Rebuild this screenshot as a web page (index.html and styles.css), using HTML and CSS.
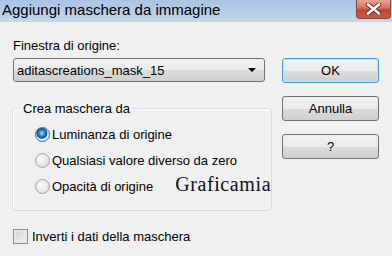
FILE: index.html
```html
<!DOCTYPE html>
<html lang="it">
<head>
  <meta charset="UTF-8">
  <title>Aggiungi maschera da immagine</title>
  <link rel="stylesheet" href="styles.css">
</head>
<body>

  <div class="window">
    <div class="titlebar">
      <span class="title">Aggiungi maschera da immagine</span>
      <button class="close">
        <svg width="17" height="12" viewBox="0 0 17 12">
          <path d="M3 1.5 L14 10.5 M14 1.5 L3 10.5" stroke="#6b2a22" stroke-width="4.4" stroke-linecap="round"/>
          <path d="M3 1.5 L14 10.5 M14 1.5 L3 10.5" stroke="#ffffff" stroke-width="2.6" stroke-linecap="round"/>
        </svg>
      </button>
    </div>

    <div class="content">
      <div class="left">
        <div class="label">Finestra di origine:</div>
        <div class="select">
          <span>aditascreations_mask_15</span>
          <span class="arrow"></span>
        </div>

        <fieldset class="group">
          <legend>Crea maschera da</legend>
          <div class="option"><span class="radio checked"></span>Luminanza di origine</div>
          <div class="option"><span class="radio"></span>Qualsiasi valore diverso da zero</div>
          <div class="option"><span class="radio"></span>Opacità di origine<span class="mark">Graficamia</span></div>
        </fieldset>

        <div class="check"><span class="box"></span>Inverti i dati della maschera</div>
      </div>

      <div class="buttons">
        <button class="btn default">OK</button>
        <button class="btn">Annulla</button>
        <button class="btn">?</button>
      </div>
    </div>
  </div>

</body>
</html>
```

FILE: styles.css
```css
body {
  margin: 0;
  background-color: #f0f0f0;
  font-family: "Liberation Sans", Arial, sans-serif;
  font-size: 13px;
  color: #000;
}

.window {
  width: 392px;
  height: 256px;
  overflow: hidden;
}

.titlebar {
  height: 22px;
  display: flex;
  justify-content: space-between;
  align-items: flex-start;
  background: linear-gradient(#a9c4e3, #c4d7ec);
}

.title {
  font-size: 15px;
  line-height: 20px;
  padding-left: 2px;
}

.close {
  width: 35px;
  height: 19px;
  margin-right: 1px;
  padding: 0;
  border: 1px solid #83463d;
  border-top: none;
  border-radius: 0 0 4px 4px;
  background: linear-gradient(#e6a394, #d2715f 45%, #c2432f 55%, #cf5b43);
  display: flex;
  justify-content: center;
  align-items: center;
}

.content {
  display: flex;
  padding: 0 13px 0 12px;
}

.left {
  width: 255px;
}

.label {
  margin-top: 17px;
  margin-left: 1px;
  line-height: 14px;
}

.select {
  margin: 5px 2px 0 1px;
  height: 22px;
  border: 1px solid #707070;
  border-radius: 3px;
  background: linear-gradient(#f2f2f2, #ebebeb 50%, #dddddd 50%, #cfcfcf);
  display: flex;
  align-items: center;
  justify-content: space-between;
  padding: 0 8px 0 3px;
}

.arrow {
  width: 0;
  height: 0;
  border-left: 4px solid transparent;
  border-right: 4px solid transparent;
  border-top: 4px solid #000;
}

.group {
  margin: 19px 0 0 0;
  padding: 5px 0 11px 22px;
  border: 1px solid #d5dfe5;
  border-radius: 3px;
  box-shadow: inset 1px 1px 0 #fff;
}

.group legend {
  padding: 0 2px;
  margin-left: -14px;
  line-height: 15px;
}

.option {
  display: flex;
  align-items: center;
  height: 26px;
  white-space: nowrap;
}

.radio {
  width: 13px;
  height: 13px;
  border: 1px solid #a4a4a4;
  border-radius: 50%;
  background: radial-gradient(circle at 40% 40%, #fdfdfd, #e0e0e0 70%, #cdcdcd);
  margin-right: 2px;
}

.radio.checked {
  border-color: #3a6d96;
  background: radial-gradient(circle at 45% 40%, #a9e4ff 0, #2f8fd0 25%, #0b4f8c 48%, #d9e4ee 55%, #f6f6f6);
}

.mark {
  font-family: "Liberation Serif", "Times New Roman", serif;
  font-size: 20px;
  color: #111;
  letter-spacing: 0.6px;
  margin-left: 22px;
  margin-top: -3px;
}

.check {
  display: flex;
  align-items: center;
  margin-top: 18px;
  margin-left: 1px;
}

.box {
  width: 13px;
  height: 13px;
  border: 1px solid #8e8f8f;
  background: linear-gradient(135deg, #cbcfd5, #f6f6f6);
  box-shadow: inset 0 0 0 2px #e6e8ea;
  margin-right: 4px;
}

.buttons {
  margin-left: 15px;
  margin-top: 36px;
  display: flex;
  flex-direction: column;
  gap: 13px;
}

.btn {
  width: 97px;
  height: 25px;
  border: 1px solid #707070;
  border-radius: 3px;
  background: linear-gradient(#f2f2f2, #ebebeb 50%, #dddddd 50%, #cfcfcf);
  font-family: "Liberation Sans", Arial, sans-serif;
  font-size: 13px;
  color: #000;
  padding: 0;
}

.btn.default {
  border-color: #3c9fd9;
  box-shadow: inset 0 0 0 1px #bfe6fb;
}
```
